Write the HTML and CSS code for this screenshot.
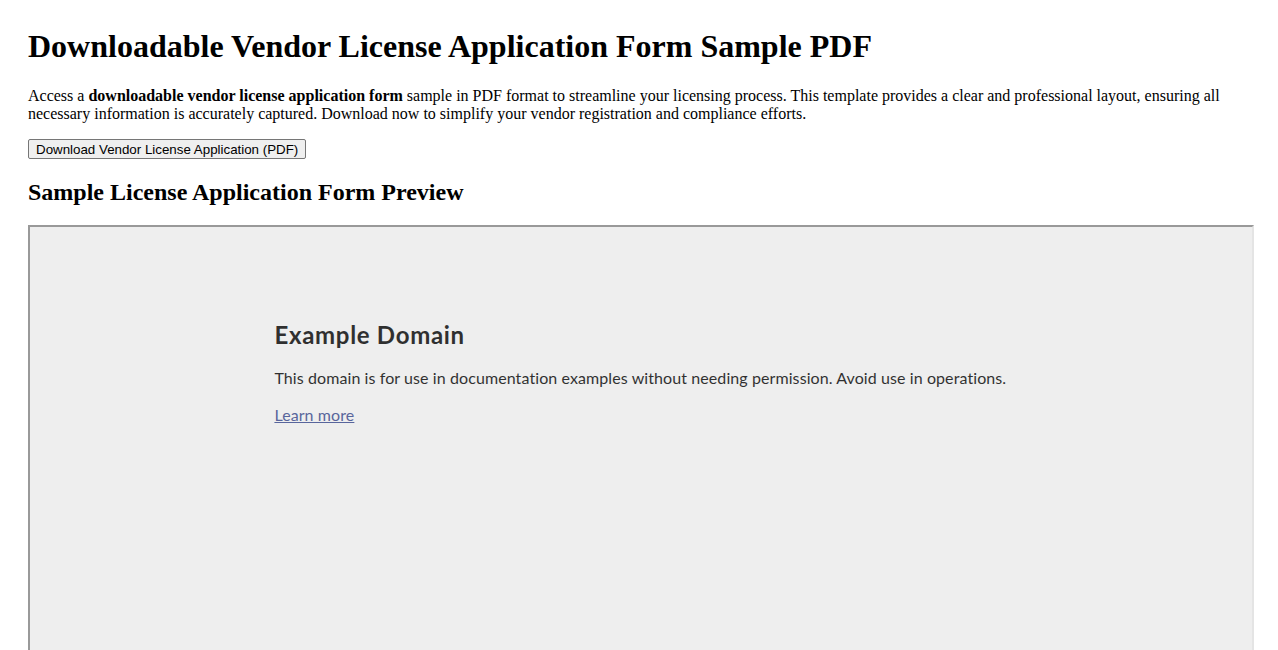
FILE: index.html
```html
<!DOCTYPE html>
<html lang="en">
<head>
  <meta charset="UTF-8">
  <meta name="viewport" content="width=device-width, initial-scale=1.0">
  <title>Downloadable Vendor License Application Form Sample PDF</title>
  <link rel="stylesheet" href="styles.css">
</head>
<body>
  <h1>Downloadable Vendor License Application Form Sample PDF</h1>
  <p>Access a <strong>downloadable vendor license application form</strong> sample in PDF format to streamline your licensing process. This template provides a clear and professional layout, ensuring all necessary information is accurately captured. Download now to simplify your vendor registration and compliance efforts.</p>

  <button class="download-button">Download Vendor License Application (PDF)</button>

  <h2>Sample License Application Form Preview</h2>

  <div class="preview-frame">
    <div class="preview-page">
      <h3>Example Domain</h3>
      <p>This domain is for use in documentation examples without needing permission. Avoid use in operations.</p>
      <p><a href="#">Learn more</a></p>
    </div>
  </div>
</body>
</html>
```

FILE: styles.css
```css
body {
  margin: 8px;
  padding: 20px;
  font-family: "Liberation Serif", "Times New Roman", serif;
  font-size: 16px;
  color: #000;
  background: #fff;
}
h1 {
  font-size: 32px;
  margin: 0 0 22px;
}
p {
  line-height: 18px;
  margin: 0 0 16px;
}
.download-button {
  font-family: "Liberation Sans", Arial, sans-serif;
  font-size: 13.333px;
  color: #000;
  background-color: #efefef;
  border: 1px solid #767676;
  border-radius: 2px;
  padding: 1.5px 7px;
}
h2 {
  font-size: 24px;
  margin: 20px 0 19px;
}
.preview-frame {
  width: 100%;
  height: 600px;
  background-color: #eee;
  border-style: solid;
  border-width: 2px;
  border-color: #999 #e4e4e4 #e4e4e4 #999;
}
.preview-page {
  width: 60%;
  margin: 92px auto 0;
  font-family: Lato, "Open Sans", sans-serif;
  opacity: 0.8;
  color: #000;
}
.preview-page h3 {
  font-size: 24px;
  line-height: 32px;
  letter-spacing: 0.7px;
  margin: 0 0 14px;
}
.preview-page p {
  line-height: 21px;
  letter-spacing: 0.09px;
  margin: 16px 0;
}
.preview-page a {
  color: #348;
}
```
